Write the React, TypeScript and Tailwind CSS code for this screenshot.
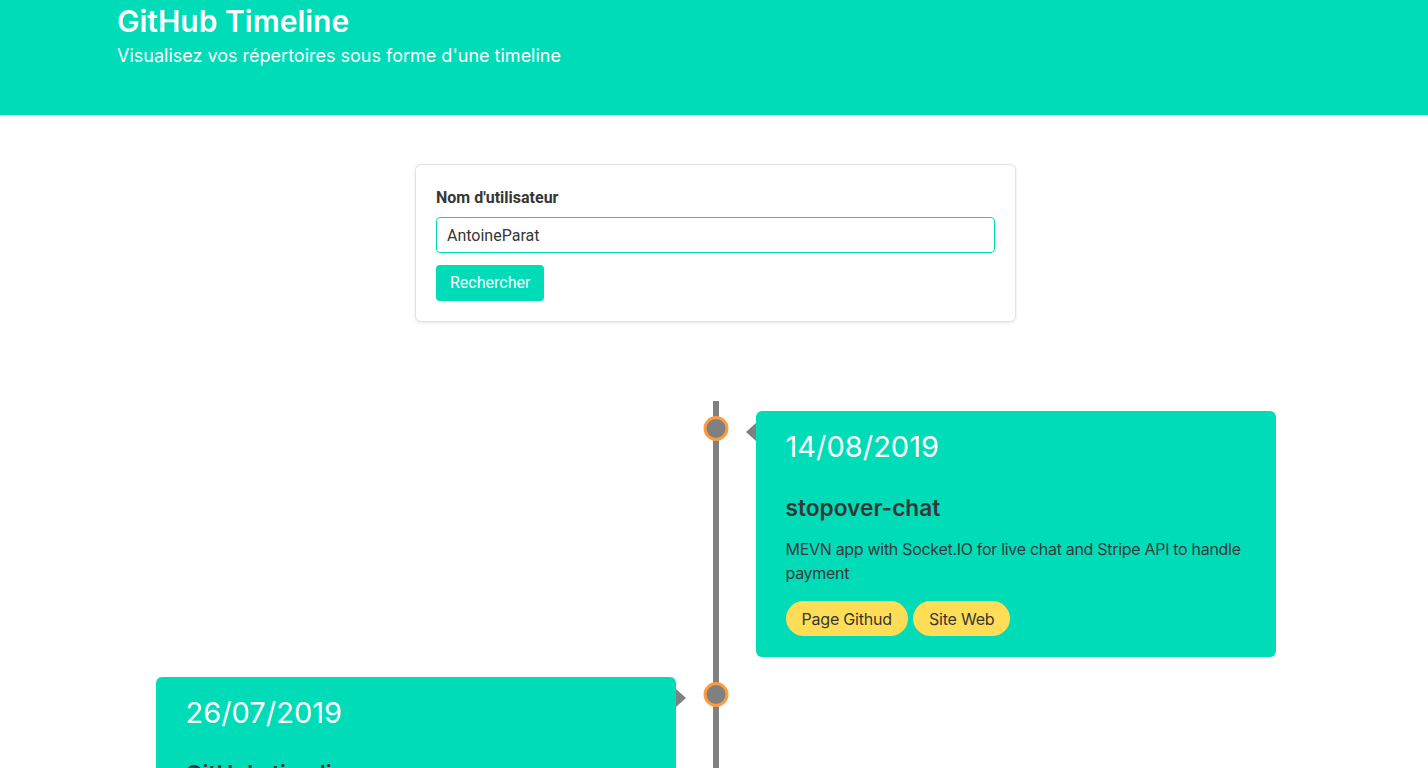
import { useState } from "react";

type Repo = {
  date: string;
  name: string;
  description: string;
  side: "left" | "right";
};

const repos: Repo[] = [
  {
    date: "14/08/2019",
    name: "stopover-chat",
    description:
      "MEVN app with Socket.IO for live chat and Stripe API to handle payment",
    side: "right",
  },
  {
    date: "26/07/2019",
    name: "GitHub-timeline",
    description: "Visualisez vos répertoires GitHub sous forme d'une timeline",
    side: "left",
  },
];

function TimelineItem({ repo }: { repo: Repo }) {
  const isLeft = repo.side === "left";

  return (
    <div className="relative grid grid-cols-2">
      {/* dot on the line */}
      <span className="absolute left-1/2 top-[5px] h-[25px] w-[25px] -translate-x-1/2 rounded-full border-[3px] border-[#ff9a3e] bg-[#808080]" />

      <div className={isLeft ? "col-start-1 pr-[40px]" : "col-start-2 pl-[40px]"}>
        <div className="relative rounded-[6px] bg-[#00dbb8] px-[30px] pt-[16px] pb-[21px]">
          {isLeft ? (
            <span className="absolute -right-[10px] top-[12px] h-0 w-0 border-y-[9px] border-l-[10px] border-y-transparent border-l-[#808080]" />
          ) : (
            <span className="absolute -left-[10px] top-[12px] h-0 w-0 border-y-[9px] border-r-[10px] border-y-transparent border-r-[#808080]" />
          )}

          <p className="text-[29px] leading-[40px] text-white">{repo.date}</p>
          <h3 className="mt-[27px] text-[22.7px] font-semibold leading-[27px] text-[#363636]">
            {repo.name}
          </h3>
          <p className="mt-[16px] text-[16px] leading-[24px] tracking-[-0.3px] text-[#3a3a3a]">
            {repo.description}
          </p>
          <div className="mt-[16px] flex gap-[5px]">
            <a className="flex h-[35px] items-center rounded-full bg-[#ffdd57] px-[16px] text-[16px] tracking-[-0.2px] text-[#363636]">
              Page Githud
            </a>
            <a className="flex h-[35px] items-center rounded-full bg-[#ffdd57] px-[16px] text-[16px] tracking-[-0.2px] text-[#363636]">
              Site Web
            </a>
          </div>
        </div>
      </div>
    </div>
  );
}

export default function App() {
  const [username, setUsername] = useState("AntoineParat");

  return (
    <div className="min-h-screen bg-white font-['Inter',sans-serif]">
      {/* Hero */}
      <header className="h-[115px] bg-[#00dbb8] px-[117px] pt-[3px]">
        <h1 className="text-[30px] font-semibold leading-[36px] text-white">
          GitHub Timeline
        </h1>
        <p className="mt-[5px] text-[18px] leading-[24px] text-white">
          Visualisez vos répertoires sous forme d'une timeline
        </p>
      </header>

      <main className="pl-[3px] pt-[49px] pb-[40px]">
        {/* Search */}
        <div className="mx-auto w-[601px] rounded-[6px] border border-[#e3e3e3] bg-white px-[20px] pt-[21px] pb-[20px] font-['Roboto',sans-serif] shadow-[0_1px_3px_rgba(10,10,10,0.1)]">
          <label className="block text-[16px] font-bold leading-[24px] text-[#363636]">
            Nom d'utilisateur
          </label>
          <input
            value={username}
            onChange={(e) => setUsername(e.target.value)}
            className="mt-[7px] block h-[36px] w-full rounded-[4px] border border-[#00dbb8] px-[10px] text-[16px] text-[#363636] outline-none"
          />
          <button className="mt-[12px] h-[36px] rounded-[4px] bg-[#00dbb8] px-[14px] text-[16px] text-white">
            Rechercher
          </button>
        </div>

        {/* Timeline */}
        <div className="relative mx-auto mt-[79px] flex w-[1120px] flex-col gap-[20px] pt-[10px]">
          <span className="absolute bottom-0 left-1/2 top-0 w-[6px] -translate-x-1/2 bg-[#808080]" />
          {repos.map((repo) => (
            <TimelineItem key={repo.name} repo={repo} />
          ))}
        </div>
      </main>
    </div>
  );
}
